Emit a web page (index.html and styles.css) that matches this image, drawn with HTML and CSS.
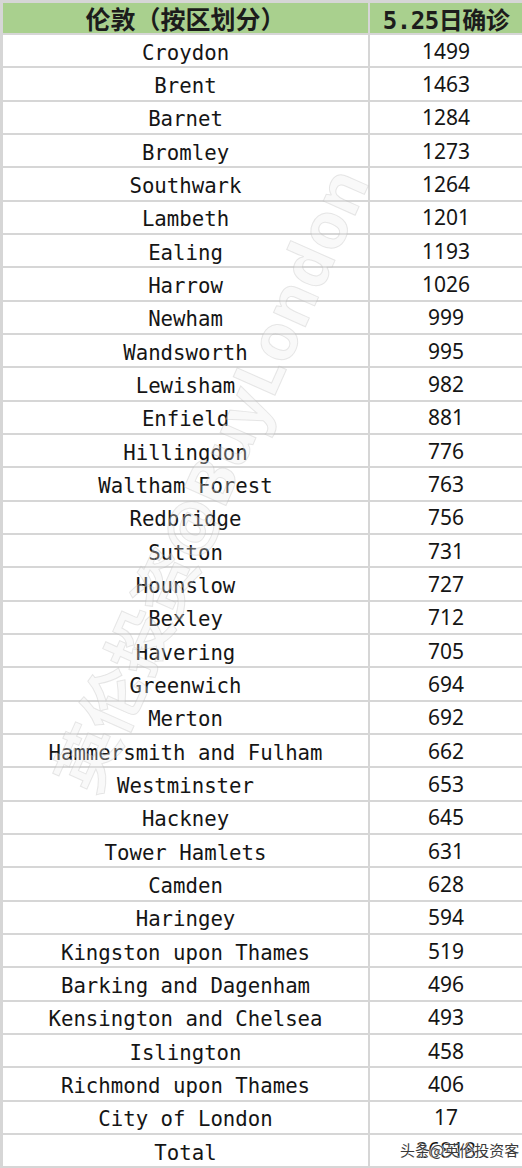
FILE: index.html
```html
<!DOCTYPE html>
<html lang="zh">
<head>
<meta charset="utf-8">
<title>伦敦确诊</title>
<link rel="stylesheet" href="styles.css">
</head>
<body>
<div class="sheet">
  <div class="grid">
    <div class="hd hd-l">伦敦（按区划分）</div><div class="hd">5.25日确诊</div>
    <div class="nm">Croydon</div><div class="val">1499</div>
    <div class="nm">Brent</div><div class="val">1463</div>
    <div class="nm">Barnet</div><div class="val">1284</div>
    <div class="nm">Bromley</div><div class="val">1273</div>
    <div class="nm">Southwark</div><div class="val">1264</div>
    <div class="nm">Lambeth</div><div class="val">1201</div>
    <div class="nm">Ealing</div><div class="val">1193</div>
    <div class="nm">Harrow</div><div class="val">1026</div>
    <div class="nm">Newham</div><div class="val">999</div>
    <div class="nm">Wandsworth</div><div class="val">995</div>
    <div class="nm">Lewisham</div><div class="val">982</div>
    <div class="nm">Enfield</div><div class="val">881</div>
    <div class="nm">Hillingdon</div><div class="val">776</div>
    <div class="nm">Waltham Forest</div><div class="val">763</div>
    <div class="nm">Redbridge</div><div class="val">756</div>
    <div class="nm">Sutton</div><div class="val">731</div>
    <div class="nm">Hounslow</div><div class="val">727</div>
    <div class="nm">Bexley</div><div class="val">712</div>
    <div class="nm">Havering</div><div class="val">705</div>
    <div class="nm">Greenwich</div><div class="val">694</div>
    <div class="nm">Merton</div><div class="val">692</div>
    <div class="nm">Hammersmith and Fulham</div><div class="val">662</div>
    <div class="nm">Westminster</div><div class="val">653</div>
    <div class="nm">Hackney</div><div class="val">645</div>
    <div class="nm">Tower Hamlets</div><div class="val">631</div>
    <div class="nm">Camden</div><div class="val">628</div>
    <div class="nm">Haringey</div><div class="val">594</div>
    <div class="nm">Kingston upon Thames</div><div class="val">519</div>
    <div class="nm">Barking and Dagenham</div><div class="val">496</div>
    <div class="nm">Kensington and Chelsea</div><div class="val">493</div>
    <div class="nm">Islington</div><div class="val">458</div>
    <div class="nm">Richmond upon Thames</div><div class="val">406</div>
    <div class="nm">City of London</div><div class="val">17</div>
    <div class="nm">Total</div><div class="val">26818</div>
  </div>
  <div class="wm">英伦投资@BuyLondon</div>
  <div class="wm2">头条@英伦投资客</div>
</div>
</body>
</html>
```

FILE: styles.css
```css
html, body {
  margin: 0;
  padding: 0;
  background: #ffffff;
}
.sheet {
  position: relative;
  width: 522px;
  height: 1168px;
  overflow: hidden;
  background: #d6d6d6;
}
.grid {
  display: grid;
  grid-template-columns: 365px 1fr;
  grid-template-rows: 30px;
  grid-auto-rows: 31.33px;
  gap: 2px;
  padding: 3px 0 0 3px;
}
.hd {
  background: #a9d08e;
  display: flex;
  align-items: center;
  justify-content: center;
  font-family: "DejaVu Sans Mono", "Noto Sans CJK SC", monospace;
  font-weight: 700;
  font-size: 24px;
  letter-spacing: -0.5px;
  color: #1c1c1c;
  white-space: nowrap;
}
.hd-l {
  font-size: 25px;
  letter-spacing: 0;
}
.nm {
  background: #ffffff;
  display: flex;
  align-items: center;
  justify-content: center;
  font-family: "DejaVu Sans Mono", monospace;
  font-size: 20.7px;
  line-height: 1;
  padding-top: 5px;
  color: #151515;
  white-space: pre;
}
.val {
  background: #ffffff;
  display: flex;
  align-items: center;
  justify-content: center;
  font-family: "Noto Sans", sans-serif;
  font-size: 21px;
  color: #151515;
}
.wm {
  position: absolute;
  left: 208px;
  top: 478px;
  transform: translate(-50%, -50%) rotate(-66deg);
  white-space: nowrap;
  font-family: "Noto Sans", "Noto Sans CJK SC", sans-serif;
  font-weight: 700;
  font-size: 64px;
  color: rgba(235, 235, 235, 0.3);
  -webkit-text-stroke: 1px rgba(185, 185, 185, 0.32);
  pointer-events: none;
}
.wm2 {
  position: absolute;
  left: 400px;
  top: 1139px;
  font-family: "Noto Sans CJK SC", sans-serif;
  font-size: 15px;
  color: #3a3a3a;
  text-shadow: 0 0 2px #fff, 0 0 2px #fff, 0 0 1px #fff;
  white-space: nowrap;
  pointer-events: none;
}
```
